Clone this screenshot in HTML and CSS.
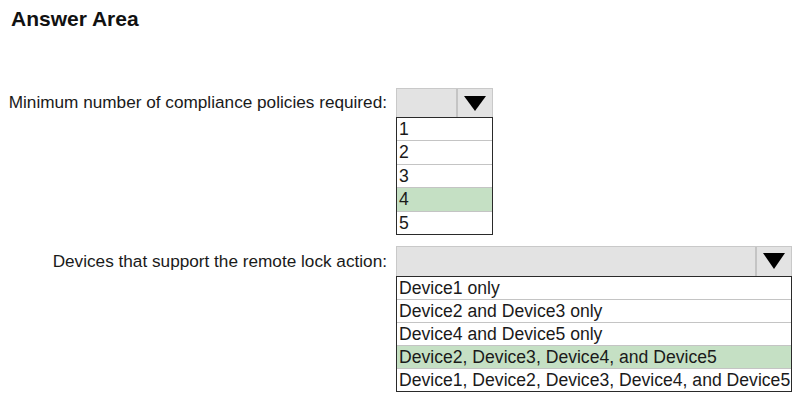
FILE: index.html
```html
<!DOCTYPE html>
<html>
<head>
<meta charset="utf-8">
<link rel="stylesheet" href="styles.css">
</head>
<body>
<div class="page">
  <h1 class="title">Answer Area</h1>
  <div class="grid">
    <div class="label label-1">Minimum number of compliance policies required:</div>
    <div class="dropdown dd-small">
      <div class="dd-head">
        <div class="dd-field"></div>
        <div class="dd-btn"><svg width="22" height="15" viewBox="0 0 22 15"><polygon points="0,0 22,0 11,15" fill="#000"/></svg></div>
      </div>
      <ul class="dd-list">
        <li>1</li>
        <li>2</li>
        <li>3</li>
        <li class="sel">4</li>
        <li>5</li>
      </ul>
    </div>
    <div class="label label-2">Devices that support the remote lock action:</div>
    <div class="dropdown dd-wide">
      <div class="dd-head">
        <div class="dd-field"></div>
        <div class="dd-btn"><svg width="22" height="16" viewBox="0 0 22 16"><polygon points="0,0 22,0 11,16" fill="#000"/></svg></div>
      </div>
      <ul class="dd-list">
        <li>Device1 only</li>
        <li>Device2 and Device3 only</li>
        <li>Device4 and Device5 only</li>
        <li class="sel">Device2, Device3, Device4, and Device5</li>
        <li>Device1, Device2, Device3, Device4, and Device5</li>
      </ul>
    </div>
  </div>
</div>
</body>
</html>
```

FILE: styles.css
```css
html, body {
  margin: 0;
  padding: 0;
  background: #fff;
}
body {
  font-family: "Liberation Sans", Arial, sans-serif;
  color: #1a1a1a;
}
.page {
  padding-top: 7px;
}
.title {
  margin: 0 0 0 11px;
  font-size: 21px;
  line-height: 24px;
  font-weight: bold;
  color: #111;
}
.grid {
  display: grid;
  grid-template-columns: 387px auto;
  column-gap: 9px;
  row-gap: 11px;
  margin-top: 57px;
  align-items: start;
}
.label {
  justify-self: end;
  font-size: 17.2px;
  white-space: nowrap;
}
.label-1 {
  line-height: 29px;
}
.label-2 {
  line-height: 30px;
}
.dropdown {
  display: flex;
  flex-direction: column;
}
.dd-small {
  width: 97px;
}
.dd-wide {
  width: 396px;
}
.dd-head {
  display: flex;
  box-sizing: border-box;
  border: 1px solid #c9c9c9;
  border-bottom: none;
  background: #e3e3e3;
}
.dd-small .dd-head {
  height: 29px;
}
.dd-wide .dd-head {
  height: 30px;
}
.dd-field {
  flex: 1;
}
.dd-btn {
  width: 34px;
  border-left: 2px solid #c4c4c4;
  display: flex;
  align-items: center;
  justify-content: center;
}
.dd-list {
  list-style: none;
  margin: 0;
  padding: 0;
  border: 1px solid #2a2a2a;
}
.dd-list li {
  box-sizing: border-box;
  height: 23.4px;
  line-height: 22.4px;
  padding-left: 2px;
  font-size: 17.6px;
  white-space: nowrap;
  border-top: 1px solid #c4c4c4;
}
.dd-list li:first-child {
  border-top: none;
  height: 22.4px;
}
.dd-wide .dd-list li {
  height: 23px;
  line-height: 22px;
}
.dd-wide .dd-list li:first-child {
  height: 22px;
}
.dd-list li.sel {
  background: #c5e0c4;
}
```
